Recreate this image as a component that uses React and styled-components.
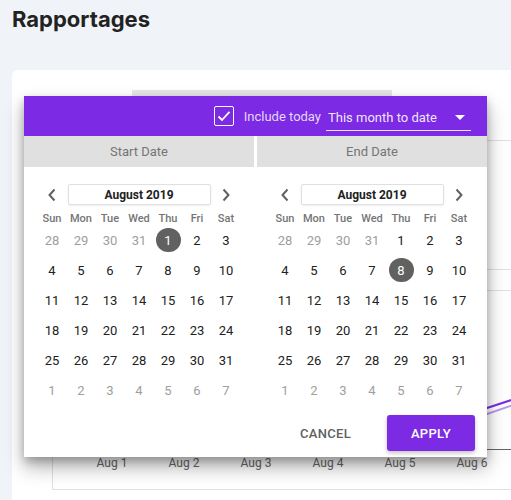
import React from 'react';
import styled, { createGlobalStyle } from 'styled-components';

const GlobalStyle = createGlobalStyle`
  body {
    margin: 0;
    background: #f0f3f8;
    overflow: hidden;
    font-family: Roboto, "Liberation Sans", sans-serif;
  }
`;

const WEEKDAYS = ['Sun', 'Mon', 'Tue', 'Wed', 'Thu', 'Fri', 'Sat'];

// August 2019 starts on a Thursday
const buildMonth = () => {
  const days = [];
  [28, 29, 30, 31].forEach((d) => days.push({ d, other: true }));
  for (let d = 1; d <= 31; d++) days.push({ d, other: false });
  for (let d = 1; d <= 7; d++) days.push({ d, other: true });
  return days;
};

const Chevron = ({ dir }) => (
  <svg width="10" height="14" viewBox="0 0 10 14">
    <path
      d={dir === 'left' ? 'M7.5 1.5 L2.5 7 L7.5 12.5' : 'M2.5 1.5 L7.5 7 L2.5 12.5'}
      fill="none"
      stroke="#616161"
      strokeWidth="2"
    />
  </svg>
);

const Calendar = ({ selected }) => (
  <CalWrap>
    <NavRow>
      <NavButton><Chevron dir="left" /></NavButton>
      <MonthBox>August 2019</MonthBox>
      <NavButton><Chevron dir="right" /></NavButton>
    </NavRow>
    <DayGrid>
      {WEEKDAYS.map((w) => (
        <Weekday key={w}>{w}</Weekday>
      ))}
      {buildMonth().map((day, i) => (
        <DayCell key={i}>
          <Day $other={day.other} $selected={!day.other && day.d === selected}>
            {day.d}
          </Day>
        </DayCell>
      ))}
    </DayGrid>
  </CalWrap>
);

const Chart = () => {
  const labels = ['Aug 1', 'Aug 2', 'Aug 3', 'Aug 4', 'Aug 5', 'Aug 6'];
  return (
    <ChartSvg width="560" height="380" viewBox="0 0 560 380">
      <g stroke="#e0e0e0" strokeWidth="1">
        <line x1="40" y1="10.5" x2="560" y2="10.5" />
        <line x1="40" y1="139.5" x2="560" y2="139.5" />
        <line x1="40" y1="160.5" x2="560" y2="160.5" />
        <line x1="40.5" y1="10" x2="40.5" y2="360" />
        <line x1="40" y1="359.5" x2="560" y2="359.5" />
      </g>
      <line x1="40" y1="319.5" x2="560" y2="319.5" stroke="#666" strokeWidth="1" />
      <polyline points="420,296 475,278 560,250" fill="none" stroke="#7c2ae3" strokeWidth="2" />
      <polyline points="420,302 475,284 560,255" fill="none" stroke="#b89af0" strokeWidth="2" />
      {labels.map((l, i) => (
        <text
          key={l}
          x={100 + i * 72}
          y="337"
          textAnchor="middle"
          fontSize="12"
          fill="#666"
          fontFamily="Roboto, sans-serif"
        >
          {l}
        </text>
      ))}
    </ChartSvg>
  );
};

const App = () => (
  <>
    <GlobalStyle />
    <Page>
      <Title>Rapportages</Title>
      <Card>
        <RangeField />
        <Chart />
        <Picker>
          <Header>
            <CheckLabel>
              <CheckBox>
                <svg width="14" height="12" viewBox="0 0 14 12">
                  <path d="M1.5 6.5 L5 10 L12.5 1.8" fill="none" stroke="#fff" strokeWidth="1.8" />
                </svg>
              </CheckBox>
              Include today
            </CheckLabel>
            <Select>
              This month to date
              <Caret />
            </Select>
          </Header>
          <Tabs>
            <Tab>Start Date</Tab>
            <Tab>End Date</Tab>
          </Tabs>
          <Calendars>
            <Calendar selected={1} />
            <Calendar selected={8} />
          </Calendars>
          <Footer>
            <TextButton>Cancel</TextButton>
            <ApplyButton>Apply</ApplyButton>
          </Footer>
        </Picker>
      </Card>
    </Page>
  </>
);

const Page = styled.div`
  padding: 0 0 0 12px;
  height: 500px;
`;

const Title = styled.h1`
  margin: 0;
  padding-top: 6px;
  height: 70px;
  box-sizing: border-box;
  font-family: Inter, "Liberation Sans", sans-serif;
  font-size: 22px;
  font-weight: 700;
  color: #222;
  letter-spacing: 0;
`;

const Card = styled.div`
  position: relative;
  width: 560px;
  height: 440px;
  background: #fff;
  border-radius: 6px;
`;

const RangeField = styled.div`
  margin-left: 120px;
  padding-top: 20px;
  width: 260px;
  height: 60px;
  box-sizing: border-box;
  &::before {
    content: '';
    display: block;
    height: 30px;
    background: #e6e6e6;
  }
`;

const ChartSvg = styled.svg`
  display: block;
`;

const Picker = styled.div`
  position: absolute;
  left: 12px;
  top: 26px;
  width: 463px;
  height: 361px;
  background: #fff;
  box-shadow: 0 10px 18px rgba(0, 0, 0, 0.32), 0 4px 8px rgba(0, 0, 0, 0.2);
  display: flex;
  flex-direction: column;
`;

const Header = styled.div`
  height: 40px;
  background: #7c2ae3;
  display: flex;
  align-items: center;
  justify-content: flex-end;
  padding-right: 16px;
`;

const CheckLabel = styled.label`
  display: flex;
  align-items: center;
  gap: 10px;
  font-size: 13px;
  color: rgba(255, 255, 255, 0.82);
  margin-right: 5px;
`;

const CheckBox = styled.span`
  width: 20px;
  height: 20px;
  box-sizing: border-box;
  border: 1.5px solid #fff;
  border-radius: 2px;
  display: flex;
  align-items: center;
  justify-content: center;
`;

const Select = styled.div`
  position: relative;
  width: 145px;
  height: 26px;
  box-sizing: border-box;
  padding: 5px 0 0 2px;
  margin-top: 3px;
  border-bottom: 1px solid rgba(255, 255, 255, 0.85);
  font-size: 13px;
  color: rgba(255, 255, 255, 0.9);
`;

const Caret = styled.span`
  position: absolute;
  right: 6px;
  top: 10px;
  border-left: 5px solid transparent;
  border-right: 5px solid transparent;
  border-top: 5px solid #fff;
`;

const Tabs = styled.div`
  display: grid;
  grid-template-columns: 1fr 1fr;
  gap: 3px;
  height: 31px;
`;

const Tab = styled.div`
  background: #e0e0e0;
  color: #757575;
  font-size: 13px;
  display: flex;
  align-items: center;
  justify-content: center;
`;

const Calendars = styled.div`
  display: grid;
  grid-template-columns: 1fr 1fr;
  gap: 3px;
`;

const CalWrap = styled.div`
  display: flex;
  flex-direction: column;
  align-items: center;
  padding-top: 17px;
`;

const NavRow = styled.div`
  display: flex;
  align-items: center;
  width: 203px;
  height: 21px;
`;

const NavButton = styled.div`
  width: 29px;
  display: flex;
  justify-content: center;
`;

const MonthBox = styled.div`
  flex: 1;
  margin: 0 1px;
  height: 21px;
  box-sizing: border-box;
  border: 1px solid #e0e0e0;
  border-radius: 2px;
  box-shadow: 0 1px 2px rgba(0, 0, 0, 0.08);
  display: flex;
  align-items: center;
  justify-content: center;
  font-size: 12px;
  font-weight: 700;
  color: #212121;
`;

const DayGrid = styled.div`
  display: grid;
  grid-template-columns: repeat(7, 29px);
  grid-auto-rows: 30px;
  grid-template-rows: 20px;
`;

const Weekday = styled.div`
  display: flex;
  align-items: flex-end;
  justify-content: center;
  font-size: 11px;
  font-weight: 500;
  color: #757575;
`;

const DayCell = styled.div`
  display: flex;
  align-items: center;
  justify-content: center;
`;

const Day = styled.span`
  width: 25px;
  height: 24px;
  border-radius: 12px;
  display: flex;
  align-items: center;
  justify-content: center;
  font-size: 13px;
  color: ${(p) => (p.$selected ? '#fff' : p.$other ? '#9e9e9e' : '#212121')};
  background: ${(p) => (p.$selected ? '#616161' : 'transparent')};
`;

const Footer = styled.div`
  display: flex;
  justify-content: flex-end;
  align-items: center;
  padding: 10px 12px 0 0;
`;

const TextButton = styled.button`
  background: none;
  border: 0;
  height: 36px;
  padding: 0 16px;
  margin-right: 20px;
  font-family: Roboto, sans-serif;
  font-size: 13px;
  font-weight: 500;
  letter-spacing: 0.3px;
  text-transform: uppercase;
  color: #616161;
`;

const ApplyButton = styled.button`
  width: 88px;
  height: 36px;
  border: 0;
  border-radius: 3px;
  background: #7c2ae3;
  box-shadow: 0 2px 4px rgba(0, 0, 0, 0.25);
  font-family: Roboto, sans-serif;
  font-size: 13px;
  font-weight: 500;
  letter-spacing: 0.3px;
  text-transform: uppercase;
  color: #fff;
`;

export default App;
